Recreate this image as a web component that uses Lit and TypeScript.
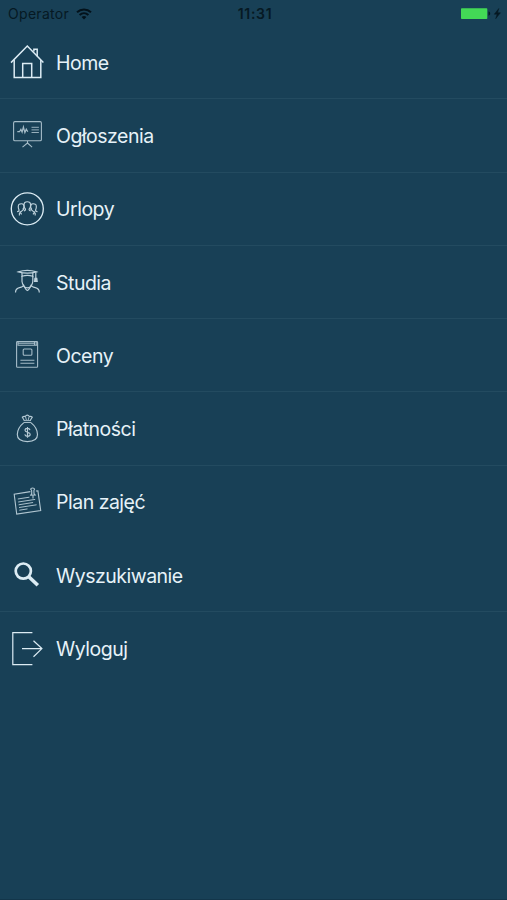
import { LitElement, html, svg, css, type SVGTemplateResult } from "lit";
import { customElement, property } from "lit/decorators.js";

const icons: Record<string, SVGTemplateResult> = {
  home: svg`<g stroke-width="1.5">
    <path d="M4 20.6 20.3 4 36.4 20.6"/>
    <path d="M7.2 18v17.5h26.6V18M15.7 35.5V21.4h9v14.1M26.9 9.5V7.2h3.300v7"/></g>`,
  board: svg`<g stroke-width="1.1" opacity=".72">
    <rect x="6.6" y="6.6" width="27.8" height="19.2" rx="1.3"/>
    <path d="M20.5 26v2.7M20.5 28l-5 4.2M20.5 28l4.6 4.2"/>
    <path d="M10.3 16.7h2.2l1.400-2.400 1.200 2.900 1.300-5.200 1.500 5.600 1.400-3.400 1.500 2.500" stroke-width="1.2"/>
    <path d="M24.5 12.3h7.4M24.5 14.9h7.4M24.500 17.500h7.400" stroke-width=".9"/></g>`,
  people: svg`<circle cx="20.300" cy="19.800" r="16" stroke-width="1.350"/>
    <g stroke-width="1.150" opacity=".85">
    <path d="M16.900 22c1.600-.4 2-1.300 1.300-2.300-1.400-1.600-1.600-5-.4-6.200 1.200-1 3.800-1 5 0 1.200 1.200 1 4.600-.4 6.200-.7 1-.3 1.900 1.300 2.300"/>
    <path d="M10.100 22.800c1.600-.4 2.400-1 1.800-2.200-.9-1.600-.9-4.700.3-5.300 1.300-.7 3.600-.5 4.300.4.700 1.200.3 3.500-.7 4.600M12.600 22.600l2 2.800M17.200 19.800l-4.800 4.400M12.400 24v2.600"/>
    <path d="M30.500 22.800c-1.600-.4-2.400-1-1.800-2.200.9-1.600.9-4.700-.3-5.300-1.300-.7-3.600-.5-4.300.4-.7 1.200-.3 3.500.7 4.600M28 22.600l-2 2.800M23.400 19.800l4.800 4.400M28.200 24v2.600"/></g>`,
  student: svg`<g stroke-width="1.2" opacity=".85">
    <path d="M11.3 9.900c5.500-1.800 12.600-1.800 18.200 0-5.500 1.600-12.700 1.600-18.200 0Z"/>
    <path d="M15 11.1v3.2c3.600-1.200 7.200-1.200 10.800 0v-3.2M28.800 10.200v8.600M27.600 19.400l.3-3h1.900l.4 3Z"/>
    <path d="M15 14v5.500c.5 3.400 2.600 6.300 5.400 6.300s4.900-2.900 5.400-6.300V14"/>
    <path d="M8.500 30.400c.1-3 1.600-4.200 4-4.700 2.200-.4 3.800-1.100 4.200-2.500 1.200 2.600 2.300 4.800 3.700 5.300 1.400-.5 2.500-2.700 3.700-5.300.4 1.400 2 2.100 4.200 2.500 2.400.5 3.900 1.700 4 4.700"/></g>`,
  book: svg`<g stroke-width="1.1" opacity=".72">
    <rect x="9.600" y="6.600" width="21" height="25.700" rx=".8"/>
    <path d="M11 6.800v3.400h19.500M11.500 8.300h16.500M27.500 7v3M29.200 7v3"/>
    <rect x="16.200" y="14" width="8.700" height="6.300" rx="1"/>
    <path d="M13.400 25.200h14M13.400 28.200h14"/></g>`,
  bag: svg`<g stroke-width="1.150" opacity=".8">
    <path d="M17.300 11.500 15.300 8.200c1-.9 2-.9 3-.7 1-1.800 3-1.800 4 0 1-.3 2-.2 3 .6l-2.100 3.400"/>
    <path d="M18.600 8l.8 3M22 8l-.8 3M16.800 11.600h7.200M16.800 13.500h7.200" stroke-width=".9"/>
    <path d="M16.900 13.600c-3.800 3-6.600 7.300-6.600 12 0 5.200 3.400 7 10.100 7s10.100-1.800 10.100-7c0-4.700-2.800-9-6.600-12"/>
    <path d="M23 21.100c-.3-1.100-1.200-1.700-2.500-1.700-1.500 0-2.500.7-2.500 1.900 0 2.700 5.200 1.200 5.200 4 0 1.200-1.100 2-2.700 2-1.500 0-2.500-.7-2.700-1.900M20.500 17.900v10.900"/></g>`,
  note: svg`<g stroke-width="1.1" opacity=".78">
    <path d="M23.400 9.600 7.200 12.200l2.500 19.900 24-3.600-2.800-19.600-2 .1"/>
    <path d="M23.600 7.200c.2-1.600 3.800-1.600 4 0l-.7 1.300.1 3 1.200 1.400-4.400.2 1-1.700-.2-3ZM26 13.200v3.200"/>
    <path d="m10.800 17 11.600-1.800M11.200 20l17-2.600M11.600 22.800l14.500-2.300M12 25.500l17.600-2.700M12.300 28.200l8.200-1.300" stroke-width=".95"/></g>`,
  search: svg`<circle cx="16.300" cy="16.100" r="7.600" stroke-width="2.700"/>
    <path d="m21.800 21.700 9 8.500" stroke-width="3.600"/>`,
  logout: svg`<g stroke-width="1.200">
    <path d="M25.400 3.600H5.800v32h19.600M15 19.600h19.700M26.500 11.700l8.400 7.900-8.400 8.100"/></g>`,
};

@customElement("menu-row")
class MenuRow extends LitElement {
  static styles = css`
    :host {
      display: flex;
      align-items: center;
      box-sizing: border-box;
      height: 73.3px;
      padding-left: 7px;
      gap: 9px;
      border-bottom: 1px solid #234b60;
    }
    :host(.plain) {
      border-bottom-color: transparent;
    }
    .icon {
      width: 40px;
      height: 40px;
      flex: none;
      fill: none;
      stroke: #dcecf4;
    }
    .label {
      color: #e6f2f8;
      font: 400 19.5px/26px Inter, sans-serif;
      letter-spacing: -0.5px;
      padding-top: 1px;
      white-space: nowrap;
    }
  `;
  @property() icon = "";
  @property() label = "";
  render() {
    return html`<svg class="icon" viewBox="0 0 40 40">${icons[this.icon]}</svg>
      <span class="label">${this.label}</span>`;
  }
}

@customElement("app-root")
class AppRoot extends LitElement {
  static styles = css`
    :host {
      display: block;
      box-sizing: border-box;
      height: 900px;
      background: #184056;
      border-bottom: 1px solid #13364a;
      overflow: hidden;
    }
    .status {
      display: grid;
      grid-template-columns: 1fr auto 1fr;
      align-items: center;
      height: 26px;
      padding: 1px 5px 0 8px;
      box-sizing: border-box;
      color: #061923;
      font: 400 14px/18px Inter, sans-serif;
    }
    .carrier,
    .power {
      display: flex;
      align-items: center;
    }
    .carrier {
      gap: 7px;
      letter-spacing: 0.3px;
    }
    .time {
      font-weight: 600;
      letter-spacing: 0.7px;
    }
    .power {
      justify-content: flex-end;
    }
  `;
  private items = [
    ["home", "Home"],
    ["board", "Ogłoszenia"],
    ["people", "Urlopy"],
    ["student", "Studia"],
    ["book", "Oceny"],
    ["bag", "Płatności"],
    ["note", "Plan zajęć", "plain"],
    ["search", "Wyszukiwanie"],
    ["logout", "Wyloguj", "plain"],
  ];
  render() {
    return html`
      <div class="status">
        <div class="carrier">
          <span>Operator</span>
          <svg width="16" height="12" viewBox="0 0 16 12" fill="none" stroke="#03121b" stroke-width="2">
            <path d="M1 4.3c4-3.800 10-3.800 14 0M3.600 7c2.600-2.300 6.200-2.300 8.800 0" />
            <path d="M5.600 9C7 7.800 9 7.800 10.400 9L8 11.400Z" fill="#03121b" stroke="none" />
          </svg>
        </div>
        <span class="time">11:31</span>
        <div class="power">
          <svg width="42" height="13" viewBox="0 0 42 13">
            <rect x="1" y="1.200" width="26.300" height="10.800" rx=".8" fill="#43d956" />
            <path d="M28.500 4.500c2.300.6 2.300 3.600 0 4.200Z" fill="#061923" />
            <path d="M38.800 1.500 34.300 7.200h2.800l-1.400 4.500 4.700-5.900h-2.800Z" fill="#061923" stroke="#061923" stroke-width=".5" />
          </svg>
        </div>
      </div>
      ${this.items.map(
        ([icon, label, variant]) =>
          html`<menu-row class=${variant ?? ""} .icon=${icon} .label=${label}></menu-row>`
      )}
    `;
  }
}
